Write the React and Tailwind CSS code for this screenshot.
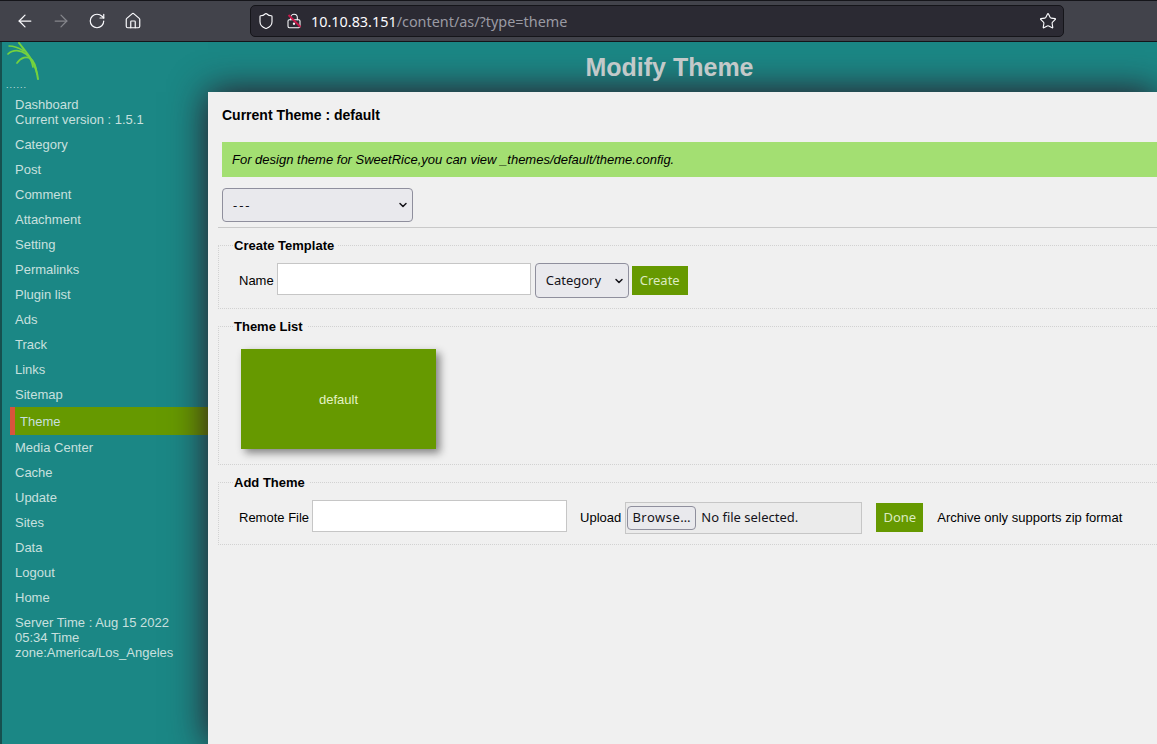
import { ArrowLeft, ArrowRight, RotateCw, Home, Shield, LockKeyhole, Star, ChevronDown } from 'lucide-react';

const NAV = ['Category', 'Post', 'Comment', 'Attachment', 'Setting', 'Permalinks', 'Plugin list', 'Ads', 'Track', 'Links', 'Sitemap'];
const NAV_AFTER = ['Media Center', 'Cache', 'Update', 'Sites', 'Data', 'Logout', 'Home'];

const UI_FONT = "font-['Noto_Sans',sans-serif]";

function Dropdown({ label, className, textClass }) {
  return (
    <div className={`relative ${className}`}>
      <select className={`w-full h-full appearance-none bg-[#e9e9ed] border border-[#8f8f9d] rounded-[4px] text-[#15141a] text-[13px] pl-[10px] pt-[1px] ${UI_FONT} ${textClass}`}>
        <option>{label}</option>
      </select>
      <ChevronDown size={12} strokeWidth={3} className="absolute right-[4px] top-1/2 -translate-y-1/2 text-[#15141a] pointer-events-none" />
    </div>
  );
}

function Section({ title, className, children }) {
  return (
    <fieldset className={`border border-dotted border-[#d2d2d2] border-r-0 pl-[20px] ${className}`}>
      <legend className="ml-[-5px] px-0 pr-[4px] text-[13px] font-bold text-black leading-[15px]">{title}</legend>
      {children}
    </fieldset>
  );
}

export default function App() {
  return (
    <div className="w-[1157px] h-[744px] overflow-hidden flex flex-col bg-[#1b8785] font-['Liberation_Sans',sans-serif]">
      {/* browser toolbar */}
      <div className="h-[42px] shrink-0 flex items-center bg-[#42434b] border-b border-t border-[#15151a] text-[#fbfbfe]">
        <ArrowLeft size={20} strokeWidth={1.5} className="ml-[15px]" />
        <ArrowRight size={20} strokeWidth={1.5} className="ml-[16px] text-[#85868c]" />
        <RotateCw size={18} strokeWidth={1.6} className="ml-[17px]" />
        <Home size={18} strokeWidth={1.6} className="ml-[18px]" />
        <div className="ml-[108px] w-[814px] h-[32px] flex items-center bg-[#2b2a33] border border-[#15151a] rounded-[5px]">
          <Shield size={18} strokeWidth={1.5} className="ml-[6px]" />
          <span className="relative ml-[11px]">
            <LockKeyhole size={16} strokeWidth={1.6} />
            <span className="absolute left-0 top-[7px] w-[17px] h-[2px] bg-[#c9184a] rotate-45" />
          </span>
          <span className={`ml-[9px] pt-[1px] text-[14.4px] ${UI_FONT}`}>
            10.10.83.151<span className="text-[#9a9aa3]">/content/as/?type=theme</span>
          </span>
          <Star size={18} strokeWidth={1.5} className="ml-auto mr-[6px]" />
        </div>
      </div>

      {/* page header */}
      <div className="h-[50px] shrink-0 flex">
        <div className="w-[208px] shrink-0 border-l-2 border-[#16504f]">
          <svg width="36" height="38" viewBox="0 0 36 38" className="ml-[5px]" fill="none" stroke="#74d23e" strokeLinecap="round">
            <path d="M12 1 C19 10 29 20 31 37" strokeWidth="2" />
            <path d="M2 4 C8 4 12 6 17 9" strokeWidth="1.5" />
            <path d="M1 12 C6 7 14 8 19 12 C23 15 25 19 26 25" strokeWidth="1.7" />
            <path d="M10 21 C14 15 20 14 24 17 C27 19 29 25 30 32" strokeWidth="1.7" />
          </svg>
          <div className="ml-[4px] mt-[1px] text-[9px] leading-[9px] tracking-[1px] text-[#cfe3e2]">......</div>
        </div>
        <div className="flex-1 flex items-center justify-center pr-[26px] pt-[2px]">
          <h1 className="text-[25px] font-bold text-[#c3c9c9] relative z-10">Modify Theme</h1>
        </div>
      </div>

      <div className="flex flex-1 min-h-0">
        {/* sidebar */}
        <aside className="w-[208px] shrink-0 border-l-2 border-[#16504f] text-[13px] text-[#c8e0df] leading-[15px]">
          <div className="ml-[13px] mt-[5px]">Dashboard<br />Current version : 1.5.1</div>
          <ul className="mt-[5px]">
            {NAV.map((item) => (
              <li key={item} className="h-[25px] pl-[13px] flex items-center">{item}</li>
            ))}
            <li className="ml-[8px] h-[28px] flex items-center pl-[5px] border-l-[5px] border-[#d9533c] bg-[#669900]">Theme</li>
            {NAV_AFTER.map((item) => (
              <li key={item} className="h-[25px] pl-[13px] flex items-center">{item}</li>
            ))}
          </ul>
          <div className="ml-[13px] mt-[5px] w-[170px]">Server Time : Aug 15 2022 05:34 Time zone:America/Los_Angeles</div>
        </aside>

        {/* content */}
        <main className="flex-1 min-w-0 bg-[#f0f0f0] relative shadow-[0_0_35px_#2e1020] text-[13px] text-black">
          <div className="pl-[14px] pt-[15px] font-bold text-[14px] leading-[16px]">Current Theme : default</div>
          <div className="ml-[14px] mt-[19px] h-[35px] flex items-center pl-[10px] bg-[#a3df72] italic">
            For design theme for SweetRice,you can view _themes/default/theme.config.
          </div>
          <Dropdown label="---" className="ml-[14px] mt-[11px] w-[191px] h-[34px]" textClass="tracking-[2px]" />
          <div className="ml-[10px] mt-[5px] border-t border-[#c9c9c9]" />

          <Section title="Create Template" className="ml-[10px] mt-[10px] h-[71px]">
            <div className="flex items-center mt-[10px]">
              <span>Name</span>
              <input className="ml-[3px] mb-[3px] w-[254px] h-[32px] bg-white border border-[#c6c6c6]" />
              <Dropdown label="Category" className="ml-[4px] w-[94px] h-[35px]" />
              <button className={`ml-[3px] w-[56px] h-[29px] bg-[#669900] text-[#dcebc0] text-[13px] ${UI_FONT}`}>Create</button>
            </div>
          </Section>

          <Section title="Theme List" className="ml-[10px] mt-[10px] h-[146px]">
            <div className="mt-[15px] ml-[2px] pt-[1px] w-[195px] h-[100px] flex items-center justify-center bg-[#669900] text-[#e4f2c4] shadow-[4px_4px_8px_rgba(0,0,0,0.45)]">default</div>
          </Section>

          <Section title="Add Theme" className="ml-[10px] mt-[10px] h-[70px]">
            <div className="flex items-center mt-[10px]">
              <span>Remote File</span>
              <input className="ml-[3px] mb-[4px] w-[255px] h-[32px] bg-white border border-[#c6c6c6]" />
              <span className="ml-[13px]">Upload</span>
              <div className={`ml-[4px] w-[237px] h-[32px] flex items-center border border-[#c6c6c6] bg-[#ebebeb] text-[13px] ${UI_FONT}`}>
                <button className="ml-[1px] w-[69px] h-[24px] bg-[#e9e9ed] border border-[#8f8f9d] rounded-[4px] text-[#15141a] tracking-[0.5px]">Browse…</button>
                <span className="ml-[5px] text-[#15141a]">No file selected.</span>
              </div>
              <button className={`ml-[14px] mb-[1px] w-[47px] h-[29px] bg-[#669900] text-[#dcebc0] text-[13px] ${UI_FONT}`}>Done</button>
              <span className="ml-[14px]">Archive only supports zip format</span>
            </div>
          </Section>
        </main>
      </div>
    </div>
  );
}
